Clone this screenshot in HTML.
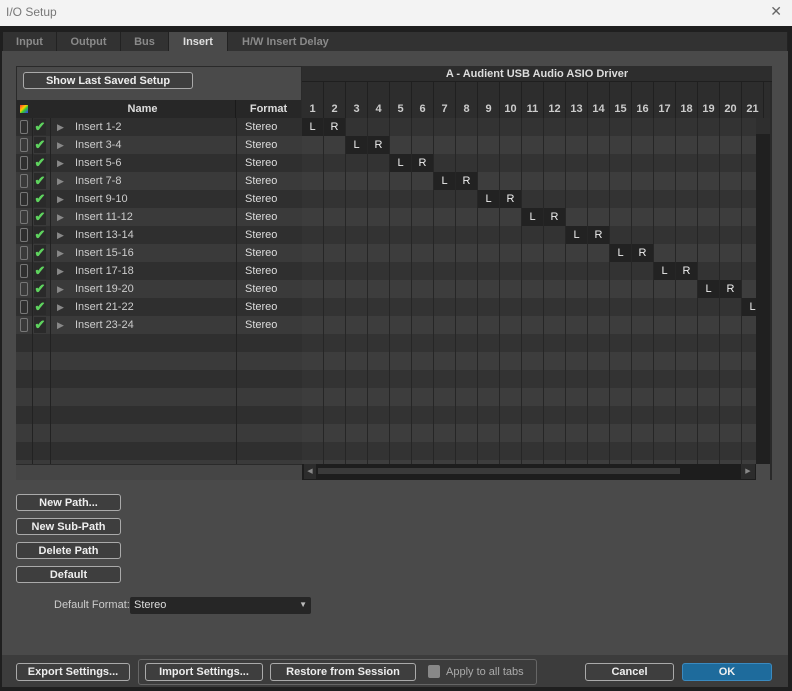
<!DOCTYPE html>
<html><head><meta charset="utf-8"><style>
*{box-sizing:border-box;margin:0;padding:0}
body{width:792px;height:691px;background:#1f1f1f;font-family:"Liberation Sans",Arial,sans-serif;position:relative;overflow:hidden;color:#ddd}
.a{position:absolute}
.title{left:0;top:0;width:792px;height:26px;background:#f3f3f3;color:#777;font-size:12px;line-height:24px;padding-left:6px}
.x{right:10px;top:3px;color:#666;font-size:14px}
.tab{top:32px;height:20px;background:#323232;color:#8a8a8a;font-size:11px;font-weight:bold;line-height:21px;text-align:center;border-right:1px solid #222}
.panel{left:2px;top:51px;width:786px;height:616px;background:#4a4a4a}
.btn{border:1px solid #aaa;border-radius:3px;background:#3e3e3e;color:#eee;font-size:11px;font-weight:bold;text-align:center;line-height:16px}
.hdrL{left:16px;top:66px;width:285px;height:34px;background:#4a4a4a;border-top:1px solid #2a2a2a;border-left:1px solid #2a2a2a}
.row{position:absolute;height:18px;font-size:11px;line-height:18px}
.gc{position:absolute;width:22px;height:18px;border-right:1px solid #262626;font-size:11px;text-align:center;line-height:18px;color:#eee}
</style></head><body>
<div class="a title">I/O Setup</div><div class="a x">✕</div>
<div class="a tab" style="left:3px;width:54px">Input</div>
<div class="a tab" style="left:57px;width:64px">Output</div>
<div class="a tab" style="left:121px;width:48px">Bus</div>
<div class="a tab" style="left:169px;width:59px;background:#4a4a4a;color:#e0e0e0;height:20px">Insert</div>
<div class="a tab" style="left:228px;width:560px;text-align:left;padding-left:14px">H/W Insert Delay</div>
<div class="a panel"></div>
<div class="a" style="left:16px;top:66px;width:756px;height:414px;background:#2a2a2a"></div>
<div class="a hdrL"></div>
<div class="a btn" style="left:23px;top:72px;width:170px;height:17px">Show Last Saved Setup</div>
<div class="a" style="left:16px;top:100px;width:285px;height:18px;background:#272727;font-size:11px;font-weight:bold;line-height:18px">
<div class="a" style="left:4px;top:5px;width:8px;height:8px;background:linear-gradient(135deg,#f33,#fc0 40%,#3c3 60%,#33f)"></div>
<div class="a" style="left:34px;width:186px;text-align:center;border-right:1px solid #1a1a1a">Name</div>
<div class="a" style="left:220px;width:65px;text-align:center">Format</div></div>
<div class="a" style="left:302px;top:66px;width:470px;height:16px;background:#2d2d2d;font-size:11px;font-weight:bold;line-height:17px;text-align:center;color:#ddd;border-bottom:1px solid #1f1f1f">A - Audient USB Audio ASIO Driver</div>
<div id="g" class="a" style="left:16px;top:82px;width:756px;height:382px;overflow:hidden"></div>
<div class="a" style="left:756px;top:118px;width:14px;height:346px;background:#202020"></div>
<div class="a" style="left:756px;top:118px;width:14px;height:16px;background:#2e2e2e"></div>
<div class="a" style="left:770px;top:82px;width:2px;height:398px;background:#2a2a2a"></div>
<div class="a" style="left:16px;top:464px;width:286px;height:16px;background:#454545;border-top:1px solid #2a2a2a"></div>
<div class="a" style="left:302px;top:464px;width:454px;height:16px;background:#1d1d1d"></div>
<div class="a" style="left:318px;top:468px;width:362px;height:6px;background:#3a3a3a"></div>
<div class="a" style="left:304px;top:464px;width:12px;height:15px;background:#2c2c2c;color:#888;font-size:7px;line-height:15px;text-align:center">◀</div>
<div class="a" style="left:741px;top:464px;width:14px;height:15px;background:#2c2c2c;color:#888;font-size:7px;line-height:15px;text-align:center">▶</div>
<div class="a" style="left:756px;top:464px;width:14px;height:16px;background:#4a4a4a"></div>
<div class="a btn" style="left:16px;top:494px;width:105px;height:17px">New Path...</div>
<div class="a btn" style="left:16px;top:518px;width:105px;height:17px">New Sub-Path</div>
<div class="a btn" style="left:16px;top:542px;width:105px;height:17px">Delete Path</div>
<div class="a btn" style="left:16px;top:566px;width:105px;height:17px">Default</div>
<div class="a" style="left:54px;top:599px;font-size:11px;color:#ccc">Default Format:</div>
<div class="a" style="left:130px;top:597px;width:181px;height:17px;background:#262626;border-radius:2px;font-size:11px;line-height:16px;padding-left:4px;color:#ddd">Stereo<span class="a" style="right:4px;top:0;font-size:8px;color:#bbb">▼</span></div>
<div class="a" style="left:2px;top:655px;width:786px;height:32px;background:#3c3c3c"></div>
<div class="a btn" style="left:16px;top:663px;width:114px;height:18px;line-height:17px">Export Settings...</div>
<div class="a" style="left:138px;top:659px;width:399px;height:26px;border:1px solid #666;border-radius:3px"></div>
<div class="a btn" style="left:145px;top:663px;width:118px;height:18px;line-height:17px">Import Settings...</div>
<div class="a btn" style="left:270px;top:663px;width:146px;height:18px;line-height:17px">Restore from Session</div>
<div class="a" style="left:428px;top:665px;width:12px;height:13px;background:#888;border-radius:2px"></div>
<div class="a" style="left:446px;top:666px;font-size:11px;color:#aaa">Apply to all tabs</div>
<div class="a btn" style="left:585px;top:663px;width:89px;height:18px;line-height:17px">Cancel</div>
<div class="a btn" style="left:682px;top:663px;width:90px;height:18px;line-height:17px;background:#1e6b9c;border-color:#3a8ac0">OK</div>
<script>
var g=document.getElementById('g'),h='';
for(var c=0;c<21;c++){h+='<div class="gc" style="left:'+(286+c*22)+'px;top:0;height:36px;background:#2d2d2d;border-right:1px solid #202020;font-weight:bold;line-height:18px;padding-top:18px;color:#ccc">'+(c+1)+'</div>';}
h+='<div class="a" style="left:748px;top:0;width:8px;height:36px;background:#2d2d2d"></div>';
for(var r=0;r<20;r++){
 var y=36+r*18, d=r%2==0, bgL=d?'#2f2f2f':'#3a3a3a', bgR=d?'#333':'#3d3d3d';
 h+='<div class="row" style="left:0;top:'+y+'px;width:286px;background:'+bgL+'">';
 h+='<div class="a" style="left:16px;top:0;width:1px;height:18px;background:#222"></div><div class="a" style="left:34px;top:0;width:1px;height:18px;background:#222"></div><div class="a" style="left:220px;top:0;width:1px;height:18px;background:#222"></div>';
 if(r<12){
  h+='<div class="a" style="left:4px;top:2px;width:8px;height:14px;border:1px solid #777;border-radius:2px"></div>';
  h+='<div class="a" style="left:18px;top:1px;width:12px;height:16px;background:#2a2a2a;color:#5ed35e;font-size:13px;font-weight:bold;text-align:center;line-height:16px">✔</div>';
  h+='<div class="a" style="left:41px;top:0;color:#888;font-size:9px">▶</div>';
  h+='<div class="a" style="left:59px;top:0;color:#ccc">Insert '+(2*r+1)+'-'+(2*r+2)+'</div>';
  h+='<div class="a" style="left:229px;top:0;color:#ddd">Stereo</div>';
 }
 h+='</div>';
 for(var c=0;c<21;c++){
  var t='',bg=bgR;
  if(r<12&&c==2*r){t='L';bg='#222';} if(r<12&&c==2*r+1){t='R';bg='#222';}
  h+='<div class="gc" style="left:'+(286+c*22)+'px;top:'+y+'px;background:'+bg+'">'+t+'</div>';
 }
}
g.innerHTML=h;
</script>
</body></html>
